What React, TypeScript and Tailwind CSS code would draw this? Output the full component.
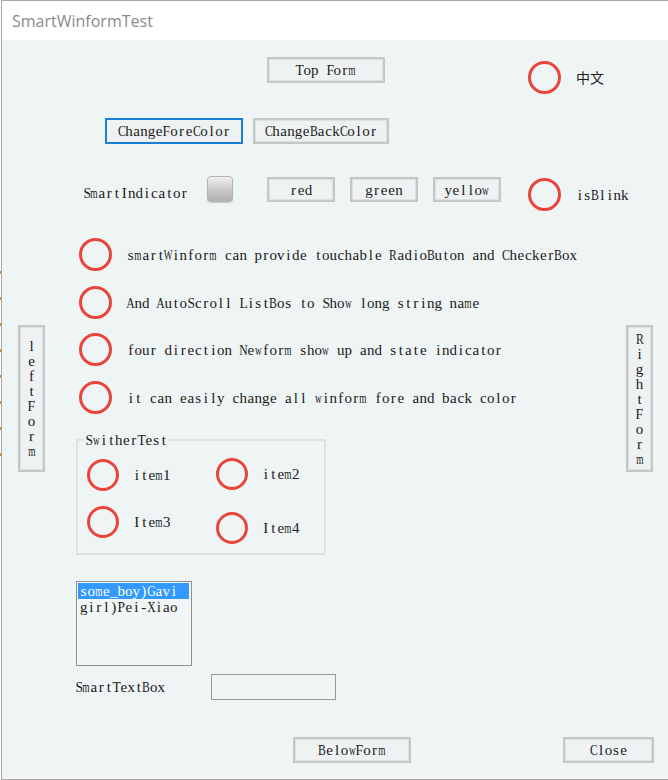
import React from "react";

// SimSun-like look: serif glyphs set in fixed 7.5px cells
const wide = "mwMW";
const capsWide = "ABCDGHKNOQRUVXY";
const capsMid = "EFLPSTZ";

const glyphClass = (ch: string) =>
  wide.includes(ch)
    ? "inline-block scale-x-[0.62]"
    : capsWide.includes(ch)
    ? "inline-block scale-x-[0.78]"
    : capsMid.includes(ch)
    ? "inline-block scale-x-[0.9]"
    : "inline-block";

const Mono = ({ text, light, className = "" }: { text: string; light?: boolean; className?: string }) => (
  <span
    className={`flex font-['Liberation_Serif',serif] text-[15px] leading-[16px] whitespace-nowrap ${
      light ? "text-white" : "text-[#1a1a1a]"
    } ${className}`}
  >
    {Array.from(text).map((ch, i) => (
      <span key={i} className="w-[7.5px] shrink-0 flex justify-center">
        <span className={glyphClass(ch)}>{ch === " " ? "\u00a0" : ch}</span>
      </span>
    ))}
  </span>
);

const Radio = ({ label, size = "big" }: { label: string; size?: "big" | "small" }) => (
  <div className="flex items-center">
    <div
      className={
        size === "big"
          ? "w-[33px] h-[33px] rounded-full border-[3px] border-[#e8453c]"
          : "w-[32px] h-[32px] rounded-full border-[3px] border-[#e8453c]"
      }
    />
    <Mono text={label} className={size === "big" ? "ml-[15px]" : "ml-[14px]"} />
  </div>
);

const WinButton = ({
  label,
  className,
  focused,
}: {
  label: string;
  className: string;
  focused?: boolean;
}) => (
  <div
    className={`${className} flex items-center justify-center bg-[#eef2f2] border-2 ${
      focused ? "border-[#1a7dd8]" : "border-[#c5c7c7] shadow-[inset_0_0_0_1px_#dfe1e1]"
    }`}
  >
    <Mono text={label} />
  </div>
);

const SideButton = ({ label, className }: { label: string; className: string }) => (
  <div
    className={`${className} flex flex-col items-center justify-center bg-[#eef2f2] border-2 border-[#c5c7c7] shadow-[inset_0_0_0_1px_#dfe1e1]`}
  >
    {label.split("").map((ch, i) => (
      <span key={i} className="h-[15px] flex items-center">
        <Mono text={ch} />
      </span>
    ))}
  </div>
);

const App = () => {
  return (
    <div className="w-[668px] h-[780px] flex bg-white">
      {/* strip behind the window */}
      <div className="w-[1px] flex flex-col pt-[271px] gap-[23px]">
        {[0, 1, 2, 3, 4, 5, 6, 7].map((i) => (
          <div key={i} className="w-[1px] h-[3px] bg-[#d9822b]" />
        ))}
      </div>

      <div className="flex-1 flex flex-col border-t border-l border-b border-[#a9a9a9]">
        {/* title bar */}
        <div className="h-[39px] bg-white flex items-center pl-[10px]">
          <span className="font-['Open_Sans',sans-serif] text-[16px] text-[#8a8a8a]">SmartWinformTest</span>
        </div>

        {/* body */}
        <div className="flex-1 bg-[#eff4f4] flex flex-col">
          {/* row: top form */}
          <div className="h-[78px] pt-[17px] flex items-start">
            <WinButton label="Top Form" className="ml-[265px] w-[118px] h-[26px]" />
            <div className="ml-[143px] mt-[4px]">
              <div className="flex items-center">
                <div className="w-[33px] h-[33px] rounded-full border-[3px] border-[#e8453c]" />
                <span className="ml-[15px] font-['Noto_Sans_CJK_SC',sans-serif] text-[14px] text-[#1c1c1c]">
                  中文
                </span>
              </div>
            </div>
          </div>

          {/* row: colors */}
          <div className="h-[58px] flex items-start">
            <WinButton label="ChangeForeColor" focused className="ml-[103px] w-[138px] h-[26px]" />
            <WinButton label="ChangeBackColor" className="ml-[10px] w-[136px] h-[26px]" />
          </div>

          {/* row: indicator */}
          <div className="h-[62px] flex items-start">
            <div className="ml-[81px] w-[124px] mt-[9px]">
              <Mono text="SmartIndicator" />
            </div>
            <div className="w-[26px] h-[26px] rounded-[4px] border border-[#b4b4b4] bg-linear-to-b from-[#f1f1f1] via-[#c9c9c9] to-[#b2b2b2] shadow-[0_1px_1px_#c8c8c8]" />
            <WinButton label="red" className="ml-[34px] mt-[1px] w-[68px] h-[25px]" />
            <WinButton label="green" className="ml-[15px] mt-[1px] w-[68px] h-[25px]" />
            <WinButton label="yellow" className="ml-[15px] mt-[1px] w-[68px] h-[25px]" />
            <div className="ml-[27px] mt-[2px]">
              <Radio label="isBlink" />
            </div>
          </div>

          {/* middle section */}
          <div className="h-[462px] flex">
            <div className="w-[74px]">
              <SideButton label="leftForm" className="ml-[16px] mt-[87px] w-[27px] h-[147px]" />
            </div>

            <div className="w-[550px] flex flex-col">
              <div className="ml-[3px] flex flex-col">
                <Radio label="smartWinform can provide touchable RadioButon and CheckerBox" />
                <div className="mt-[15px]">
                  <Radio label="And AutoScroll ListBos to Show long string name" />
                </div>
                <div className="mt-[14px]">
                  <Radio label="four direction Newform show up and state indicator" />
                </div>
                <div className="mt-[15px]">
                  <Radio label="it can easily change all winform fore and back color" />
                </div>
              </div>

              <fieldset className="mt-[18px] w-[250px] h-[123px] border-2 border-[#dde2e2]">
                <legend className="ml-[6px] px-[1px]">
                  <Mono text="SwitherTest" />
                </legend>
                <div className="flex mt-[11px]">
                  <div className="w-[129px] ml-[9px]">
                    <Radio label="item1" size="small" />
                  </div>
                  <div className="-mt-[1px]">
                    <Radio label="item2" size="small" />
                  </div>
                </div>
                <div className="flex mt-[15px]">
                  <div className="w-[129px] ml-[9px]">
                    <Radio label="Item3" size="small" />
                  </div>
                  <div className="mt-[6px]">
                    <Radio label="Item4" size="small" />
                  </div>
                </div>
              </fieldset>

              <div className="mt-[26px] w-[116px] h-[85px] border border-[#8f8f8f] bg-[#f2f6f6] p-[1px]">
                <div className="w-[111px] h-[16px] bg-[#3399ff] pl-[2px] flex items-center">
                  <Mono text="some_boy)Gavi" light />
                </div>
                <div className="h-[16px] pl-[2px] flex items-center">
                  <Mono text="girl)Pei-Xiao" />
                </div>
              </div>

              <div className="mt-[8px] flex items-center">
                <div className="w-[136px] -ml-[1px]">
                  <Mono text="SmartTextBox" />
                </div>
                <div className="w-[125px] h-[26px] border border-[#9a9a9a] bg-[#f1f5f5]" />
              </div>
            </div>

            <div className="flex-1">
              <SideButton label="RightForm" className="mt-[87px] w-[27px] h-[147px]" />
            </div>
          </div>

          {/* bottom row */}
          <div className="mt-[37px] flex items-start">
            <WinButton label="BelowForm" className="ml-[291px] w-[118px] h-[26px]" />
            <WinButton label="Close" className="ml-[152px] w-[91px] h-[26px]" />
          </div>
        </div>
      </div>
    </div>
  );
};

export default App;
